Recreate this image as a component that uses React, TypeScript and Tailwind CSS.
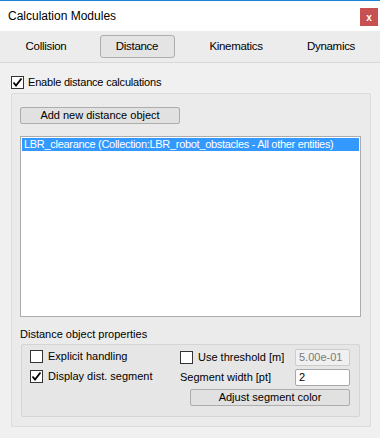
import React from "react";

const font = { fontFamily: '"Liberation Sans", Arial, sans-serif' };

function Check({ checked }: { checked?: boolean }) {
  return (
    <div className="w-[13px] h-[13px] border border-[#333333] bg-white flex items-center justify-center shrink-0">
      {checked && (
        <svg width="11" height="11" viewBox="0 0 11 11">
          <path d="M1.5 5.5 L4 8.5 L9.5 1.5" fill="none" stroke="#000" strokeWidth="1.8" />
        </svg>
      )}
    </div>
  );
}

function Button({ children, className }: { children: React.ReactNode; className: string }) {
  return (
    <div
      className={
        "h-[17px] border border-[#adadad] rounded-[2px] bg-[#e1e1e1] flex items-center justify-center text-[11px] text-black " +
        className
      }
    >
      {children}
    </div>
  );
}

export default function App() {
  return (
    <div className="w-[380px] h-[438px] bg-[#f0f0f0] border-t border-[#1883d7] text-[11px] text-black" style={font}>
      {/* Title bar */}
      <div className="h-[30px] bg-white flex items-center justify-between pl-[8px] pr-[2px]">
        <span className="text-[12px]">Calculation Modules</span>
        <div className="w-[18px] h-[18px] bg-[#c75050] flex items-center justify-center text-white text-[10px] font-bold mt-[2px]">
          x
        </div>
      </div>

      {/* Tabs */}
      <div className="h-[32px] bg-[#ececec] border-b border-[#d8d8d8] flex items-center text-[11.5px] tracking-[-0.3px]">
        <div className="w-[92px] text-center">Collision</div>
        <div className="w-[90px] flex justify-center">
          <div className="w-[75px] h-[23px] border border-[#adadad] rounded-[3px] bg-[#e4e4e4] flex items-center justify-center">
            Distance
          </div>
        </div>
        <div className="w-[108px] text-center">Kinematics</div>
        <div className="w-[82px] text-center">Dynamics</div>
      </div>

      {/* Enable */}
      <div className="flex items-center gap-[4px] pl-[11px] mt-[12px] h-[15px] text-[11px] tracking-[-0.2px]">
        <Check checked />
        <span>Enable distance calculations</span>
      </div>

      {/* Group box */}
      <div className="ml-[11px] mt-[3px] w-[360px] h-[334px] border border-[#dcdcdc] rounded-[2px] bg-[#ebebeb] pl-[8px] pt-[13px]">
        <Button className="w-[160px]">Add new distance object</Button>
        <div className="mt-[12px] w-[341px] h-[181px] border border-[#acacac] bg-white p-[1px]">
          <div className="h-[13px] bg-[#3399ff] text-white flex items-center pl-[2px] text-[11px] leading-none tracking-[-0.3px]">
            LBR_clearance (Collection:LBR_robot_obstacles - All other entities)
          </div>
        </div>
        <div className="mt-[10px] h-[14px] flex items-center">Distance object properties</div>
        <div className="mt-[3px] ml-[1px] w-[339px] h-[73px] border border-[#d5d5d5] rounded-[2px] bg-[#e6e6e6] pl-[8px] pt-[4px] flex">
          <div className="w-[150px] flex flex-col gap-[7px] pt-[1px]">
            <div className="flex items-center gap-[5px] h-[13px]">
              <Check />
              <span>Explicit handling</span>
            </div>
            <div className="flex items-center gap-[5px] h-[13px]">
              <Check checked />
              <span>Display dist. segment</span>
            </div>
          </div>
          <div className="flex flex-col gap-[3px]">
            <div className="flex items-center h-[17px]">
              <Check />
              <span className="ml-[5px] w-[97px]">Use threshold [m]</span>
              <div className="w-[55px] h-[17px] border border-[#cccccc] rounded-[2px] bg-[#f0f0f0] text-[#7a7a7a] pl-[3px] flex items-center">
                5.00e-01
              </div>
            </div>
            <div className="flex items-center h-[17px]">
              <span className="w-[115px]">Segment width [pt]</span>
              <div className="w-[55px] h-[17px] border border-[#a8a8a8] rounded-[2px] bg-white pl-[3px] flex items-center">
                2
              </div>
            </div>
            <Button className="ml-[10px] w-[160px]">Adjust segment color</Button>
          </div>
        </div>
      </div>
    </div>
  );
}
